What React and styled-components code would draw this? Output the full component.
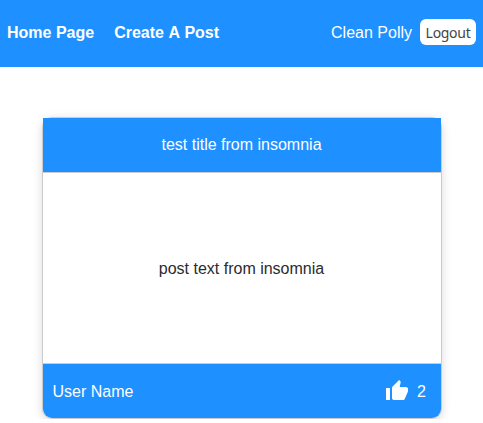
import React from "react";
import styled, { createGlobalStyle } from "styled-components";

const GlobalStyle = createGlobalStyle`
  * { box-sizing: border-box; }
  body {
    margin: 0;
    background: #fff;
    color: #2b2b2f;
    font: 16px/24px "Liberation Sans", Arial, sans-serif;
  }
`;

const Header = styled.header`
  display: flex;
  align-items: center;
  justify-content: space-between;
  height: 67px;
  padding: 0 7px 2px;
  background: dodgerblue;
  color: #fff;
`;

const Nav = styled.nav`
  display: flex;
  gap: 20px;
  font-kerning: none;
`;

const NavLink = styled.a`
  font-weight: bold;
`;

const Account = styled.div`
  display: flex;
  align-items: center;
  gap: 8px;
`;

const LogoutButton = styled.button`
  width: 56px;
  height: 26px;
  margin-top: -1px;
  padding: 0;
  border: 0;
  border-radius: 6px;
  background: #fff;
  color: #444;
  font: 14px "Noto Sans", sans-serif;
  letter-spacing: -0.3px;
`;

const Main = styled.main`
  display: flex;
  justify-content: center;
  padding-top: 50px;
`;

const Card = styled.article`
  display: flex;
  flex-direction: column;
  width: 400px;
  height: 302px;
  border: 1px solid #ccc;
  border-radius: 10px;
  box-shadow: 0 2px 10px rgba(0, 0, 0, 0.15);
`;

const CardTitle = styled.div`
  display: grid;
  place-items: center;
  height: 54px;
  background: dodgerblue;
  color: #fff;
`;

const CardBody = styled.div`
  flex: 1;
  display: grid;
  place-items: center;
  padding-top: 1px;
  border: solid #ccc;
  border-width: 1px 0;
  background: #fff;
`;

const CardFooter = styled.footer`
  display: flex;
  align-items: center;
  justify-content: space-between;
  height: 54px;
  padding: 1px 14.5px 0 10px;
  border-radius: 0 0 9px 9px;
  background: dodgerblue;
  color: #fff;
`;

const Likes = styled.div`
  display: flex;
  align-items: center;
  gap: 8.5px;
`;

const ThumbIcon = styled.svg`
  display: block;
  width: 24px;
  height: 24px;
  margin-bottom: 2px;
  fill: currentColor;
`;

const ThumbUp = () => (
  <ThumbIcon viewBox="0 0 24 24" aria-hidden="true">
    <path d="M1 21h4V9H1v12zm22-11c0-1.1-.9-2-2-2h-6.31l.95-4.57.03-.32c0-.41-.17-.79-.44-1.06L14.17 1 7.59 7.59C7.22 7.95 7 8.45 7 9v10c0 1.1.9 2 2 2h9c.83 0 1.54-.5 1.84-1.22l3.02-7.05c.09-.23.14-.47.14-.73v-2z" />
  </ThumbIcon>
);

export default function App() {
  return (
    <>
      <GlobalStyle />
      <Header>
        <Nav>
          <NavLink>Home Page</NavLink>
          <NavLink>Create A Post</NavLink>
        </Nav>
        <Account>
          <span>Clean Polly</span>
          <LogoutButton>Logout</LogoutButton>
        </Account>
      </Header>
      <Main>
        <Card>
          <CardTitle>test title from insomnia</CardTitle>
          <CardBody>post text from insomnia</CardBody>
          <CardFooter>
            <span>User Name</span>
            <Likes>
              <ThumbUp />
              <span>2</span>
            </Likes>
          </CardFooter>
        </Card>
      </Main>
    </>
  );
}
